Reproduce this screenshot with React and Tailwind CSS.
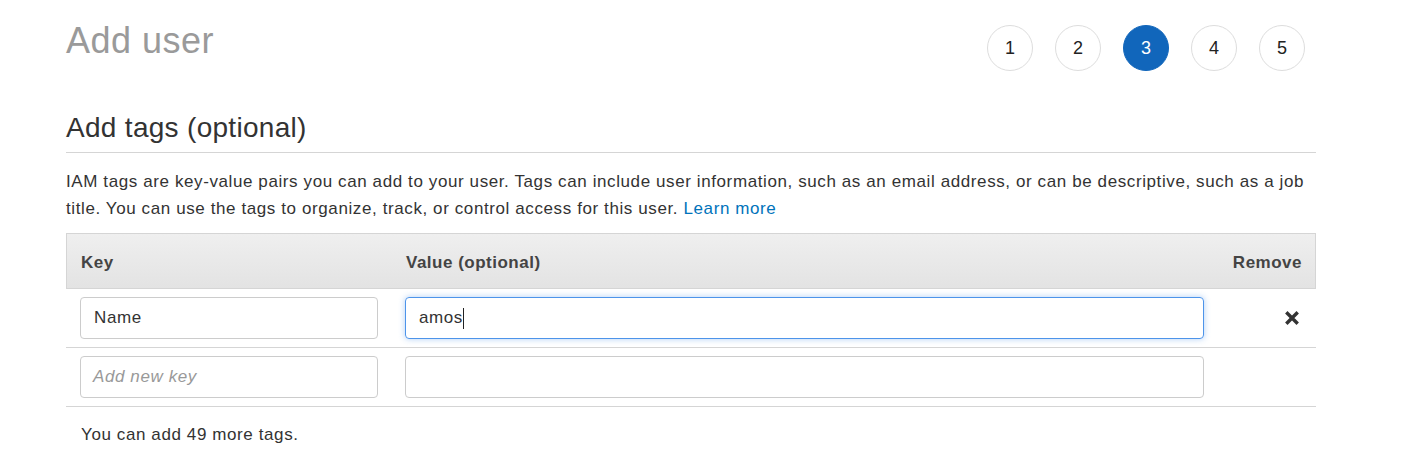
export default function App() {
  const steps = [1, 2, 3, 4, 5];

  return (
    <div className="min-h-[472px] bg-white px-[66px] font-['Liberation_Sans',Arial,sans-serif] text-[#333]">
      <div className="w-[1250px]">
        {/* Header + steps */}
        <div className="flex items-start justify-between">
          <h1 className="mt-[21px] text-[36px] leading-[40px] tracking-[0.5px] text-[#9a9a9a]">
            Add user
          </h1>
          <div className="mt-[25px] flex gap-[22px] pr-[11px]">
            {steps.map((n) => (
              <div
                key={n}
                className={
                  n === 3
                    ? "flex h-[46px] w-[46px] items-center justify-center rounded-full border border-[#1166bb] bg-[#1166bb] text-[18px] text-white"
                    : "flex h-[46px] w-[46px] items-center justify-center rounded-full border border-[#dddddd] bg-white text-[18px] text-[#222]"
                }
              >
                {n}
              </div>
            ))}
          </div>
        </div>

        {/* Section title */}
        <h2 className="mt-[40px] border-b border-[#d5d5d5] pb-[8px] text-[28px] leading-[33px] tracking-[0.3px] text-[#333]">
          Add tags (optional)
        </h2>

        <p className="mt-[15px] text-[17px] leading-[27px] tracking-[0.6px] text-[#333]">
          IAM tags are key-value pairs you can add to your user. Tags can include user information, such as an email address, or can be descriptive, such as a job title. You can use the tags to organize, track, or control access for this user.{" "}
          <span className="text-[#0073bb]">Learn more</span>
        </p>

        {/* Tags table */}
        <div className="mt-[11px]">
          <div className="grid h-[56px] grid-cols-[325px_827px_1fr] items-center border border-[#d5d5d5] bg-gradient-to-b from-[#efefef] to-[#e3e3e3] pt-[3px] text-[17px] font-bold tracking-[0.5px] text-[#444]">
            <div className="pl-[14px]">Key</div>
            <div className="pl-[14px]">Value (optional)</div>
            <div className="pr-[13px] text-right">Remove</div>
          </div>

          <div className="grid grid-cols-[325px_827px_1fr] items-center border-b border-[#d5d5d5] py-[8px]">
            <div className="px-[14px]">
              <div className="flex h-[42px] w-[298px] items-center rounded-[4px] border border-[#cccccc] px-[13px] text-[17px] tracking-[0.6px] text-[#333]">
                Name
              </div>
            </div>
            <div className="pl-[14px]">
              <div className="flex h-[42px] w-[799px] items-center rounded-[4px] border border-[#4d94ea] px-[13px] text-[17px] tracking-[0.6px] text-[#333] shadow-[0_0_6px_rgba(77,148,234,0.45)]">
                amos
                <span className="h-[21px] w-[1px] bg-[#222]" />
              </div>
            </div>
            <div className="flex justify-end pr-[17px]">
              <svg width="14" height="14" viewBox="0 0 14 14">
                <path
                  d="M2.5 2.5 L11.5 11.5 M11.5 2.5 L2.5 11.5"
                  stroke="#333"
                  strokeWidth="3.4"
                  strokeLinecap="square"
                />
              </svg>
            </div>
          </div>

          <div className="grid grid-cols-[325px_827px_1fr] items-center border-b border-[#d5d5d5] py-[8px]">
            <div className="px-[14px]">
              <div className="flex h-[42px] w-[298px] items-center rounded-[4px] border border-[#cccccc] px-[12px] text-[17px] italic tracking-[0.6px] text-[#999]">
                Add new key
              </div>
            </div>
            <div className="pl-[14px]">
              <div className="h-[42px] w-[799px] rounded-[4px] border border-[#cccccc]" />
            </div>
            <div />
          </div>
        </div>

        <p className="mt-[16px] pl-[15px] text-[17px] leading-[24px] tracking-[0.6px] text-[#333]">
          You can add 49 more tags.
        </p>
      </div>
    </div>
  );
}
